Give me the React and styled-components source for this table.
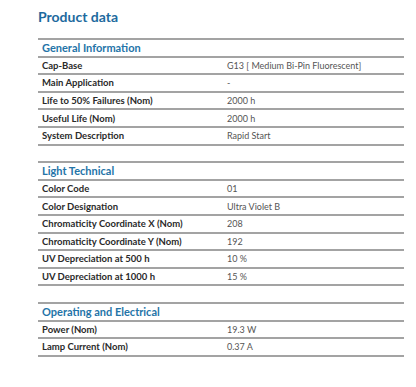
import React from "react";
import styled, { createGlobalStyle } from "styled-components";

const GlobalStyle = createGlobalStyle`
  html, body {
    margin: 0;
    padding: 0;
    background: #ffffff;
  }
  body {
    font-family: Lato, "Open Sans", "Liberation Sans", sans-serif;
  }
`;

const sections = [
  {
    title: "General Information",
    rows: [
      ["Cap-Base", "G13 [ Medium Bi-Pin Fluorescent]"],
      ["Main Application", "-"],
      ["Life to 50% Failures (Nom)", "2000 h"],
      ["Useful Life (Nom)", "2000 h"],
      ["System Description", "Rapid Start"],
    ],
  },
  {
    title: "Light Technical",
    rows: [
      ["Color Code", "01"],
      ["Color Designation", "Ultra Violet B"],
      ["Chromaticity Coordinate X (Nom)", "208"],
      ["Chromaticity Coordinate Y (Nom)", "192"],
      ["UV Depreciation at 500 h", "10 %"],
      ["UV Depreciation at 1000 h", "15 %"],
    ],
  },
  {
    title: "Operating and Electrical",
    rows: [
      ["Power (Nom)", "19.3 W"],
      ["Lamp Current (Nom)", "0.37 A"],
    ],
  },
];

const Page = styled.div`
  width: 366px;
  padding: 8px 0 0 38px;
`;

const Title = styled.h1`
  margin: 0 0 12px;
  font-size: 14px;
  line-height: 18px;
  font-weight: 700;
  color: #1d6a9e;
`;

const Section = styled.div`
  & + & {
    margin-top: 15.6px;
  }
`;

const Header = styled.div`
  height: 15.6px;
  border-top: 2px solid #a3a3a3;
  border-bottom: 2px solid #a3a3a3;
  padding-left: 4px;
  display: flex;
  align-items: center;
  font-size: 11px;
  font-weight: 700;
  color: #2474a8;
`;

const Row = styled.div`
  display: grid;
  grid-template-columns: 185px 1fr;
  height: 15.6px;
  border-bottom: 2px solid #a3a3a3;
  align-items: center;
`;

const Label = styled.div`
  padding-left: 4px;
  font-size: 9.5px;
  font-weight: 700;
  color: #2a2a2a;
`;

const Value = styled.div`
  padding-left: 4px;
  font-size: 9px;
  color: #555555;
`;

export default function App() {
  return (
    <>
      <GlobalStyle />
      <Page>
        <Title>Product data</Title>
        {sections.map((s) => (
          <Section key={s.title}>
            <Header>{s.title}</Header>
            {s.rows.map(([label, value]) => (
              <Row key={label}>
                <Label>{label}</Label>
                <Value>{value}</Value>
              </Row>
            ))}
          </Section>
        ))}
      </Page>
    </>
  );
}
